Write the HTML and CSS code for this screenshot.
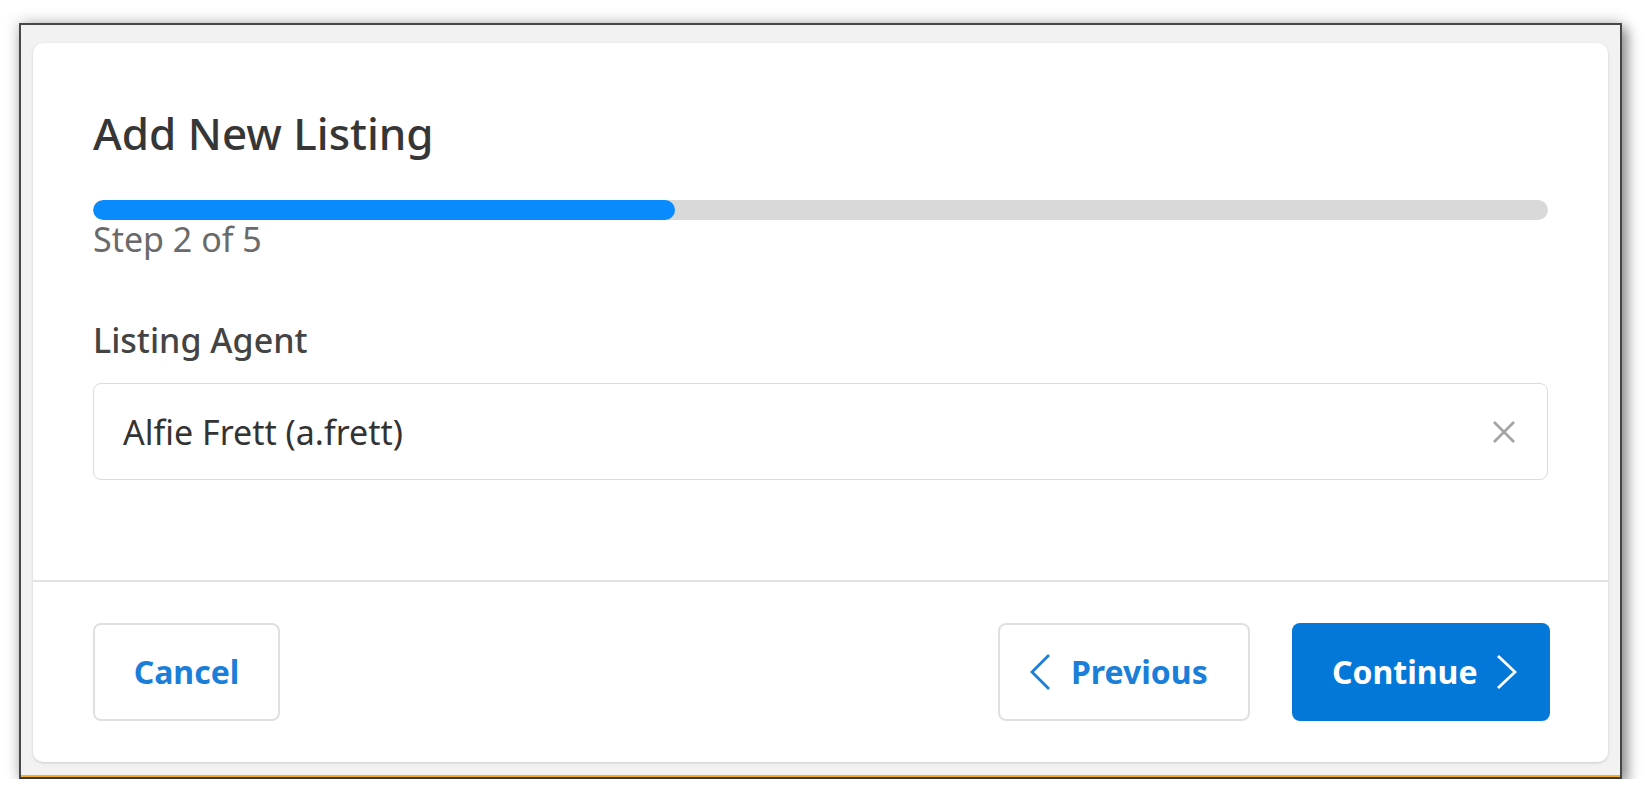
FILE: index.html
```html
<!DOCTYPE html>
<html lang="en">
<head>
<meta charset="utf-8">
<title>Add New Listing</title>
<link rel="stylesheet" href="styles.css">
</head>
<body>
<div class="frame">
  <div class="card">
    <div class="card-body">
      <h1 class="title">Add New Listing</h1>
      <div class="progress"><div class="progress-fill" style="width:40%"></div></div>
      <div class="step">Step 2 of 5</div>
      <label class="label">Listing Agent</label>
      <div class="input">
        <span class="input-text">Alfie Frett (a.frett)</span>
        <svg class="clear" width="24" height="22" viewBox="0 0 24 22"><path d="M2 1 L22 21 M22 1 L2 21" stroke="#a3a3a3" stroke-width="2.6" fill="none"/></svg>
      </div>
    </div>
    <div class="card-footer">
      <button class="btn btn-outline btn-cancel">Cancel</button>
      <div class="spacer"></div>
      <button class="btn btn-outline btn-prev">
        <svg width="20" height="36" viewBox="0 0 20 36"><polyline points="19,1 2,18 19,35" stroke="#1a7fd9" stroke-width="2.8" fill="none"/></svg>
        <span>Previous</span>
      </button>
      <button class="btn btn-primary btn-next">
        <span>Continue</span>
        <svg width="20" height="36" viewBox="0 0 20 36"><polyline points="1,2 18,18 1,34" stroke="#ffffff" stroke-width="2.8" fill="none"/></svg>
      </button>
    </div>
  </div>
</div>
</body>
</html>
```
FILE: styles.css
```css
html, body {
  margin: 0;
  padding: 0;
  background: #ffffff;
}
body {
  font-family: "Noto Sans", "Open Sans", sans-serif;
  overflow: hidden;
}
.frame {
  box-sizing: border-box;
  width: 1603px;
  height: 756px;
  margin: 23px 0 0 19px;
  border: 2px solid #474747;
  border-bottom-color: #3a3a3a;
  background: #f2f2f2;
  padding: 18px 12px 15px 12px;
  box-shadow: inset 0 -2px 0 #f2b01e, 0 0 14px rgba(0, 0, 0, 0.25), 6px 6px 12px rgba(0, 0, 0, 0.35);
}
.card {
  box-sizing: border-box;
  height: 100%;
  background: #ffffff;
  border-radius: 10px;
  box-shadow: 0 1px 3px rgba(0, 0, 0, 0.16);
  display: flex;
  flex-direction: column;
}
.card-body {
  flex: 1;
  padding: 67px 60px 0 60px;
  display: flex;
  flex-direction: column;
}
.title {
  margin: 0;
  font-size: 44px;
  line-height: 1;
  font-weight: 550;
  color: #363636;
  padding-top: 1px;
  margin-bottom: -1px;
}
.progress {
  margin-top: 46px;
  height: 20px;
  border-radius: 10px;
  background: #d9d9d9;
  overflow: hidden;
}
.progress-fill {
  height: 100%;
  background: #0a8bfd;
  border-radius: 10px;
}
.step {
  margin-top: 2px;
  font-size: 34px;
  line-height: 1;
  color: #6a6a6a;
}
.label {
  margin-top: 67px;
  font-size: 34px;
  line-height: 1;
  font-weight: 550;
  color: #444444;
}
.input {
  box-sizing: border-box;
  margin-top: 26px;
  height: 97px;
  border: 1px solid #dcdcdc;
  border-radius: 8px;
  display: flex;
  align-items: center;
  padding: 0 31px 0 29px;
}
.input-text {
  flex: 1;
  font-size: 34px;
  line-height: 1;
  color: #333333;
}
.card-footer {
  height: 180px;
  border-top: 2px solid #e2e2e2;
  padding: 0 58px 0 60px;
  display: flex;
  align-items: center;
}
.spacer {
  flex: 1;
}
.btn {
  box-sizing: border-box;
  height: 98px;
  border-radius: 8px;
  font-family: "Noto Sans", "Open Sans", sans-serif;
  font-size: 32px;
  font-weight: 700;
  line-height: 1;
  display: flex;
  align-items: center;
  cursor: pointer;
}
.btn-outline {
  background: #ffffff;
  border: 2px solid #e0e0e0;
  color: #1a7fd9;
}
.btn-cancel {
  width: 187px;
  justify-content: center;
  padding: 0;
}
.btn-prev {
  width: 252px;
  padding: 0 0 0 30px;
  gap: 21px;
}
.btn-primary {
  background: #0478d8;
  border: 0;
  color: #ffffff;
}
.btn-next {
  width: 258px;
  margin-left: 42px;
  padding: 0 0 0 40px;
  gap: 19px;
}
```
